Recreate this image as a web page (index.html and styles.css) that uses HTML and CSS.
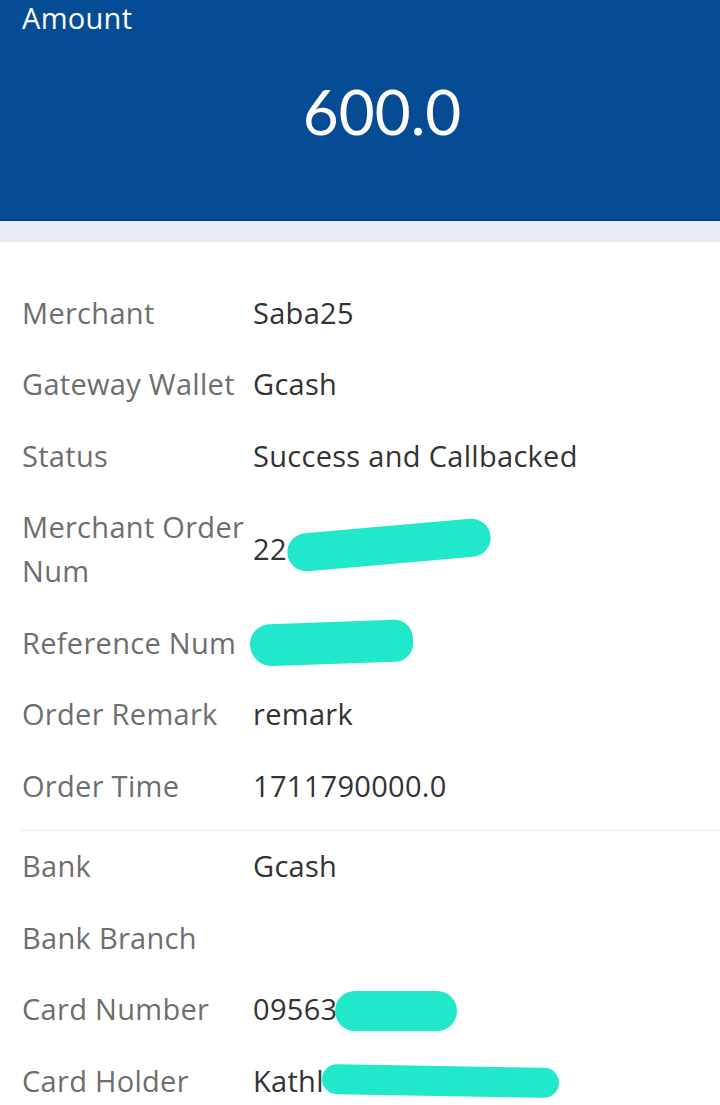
FILE: index.html
```html
<!DOCTYPE html>
<html lang="en">
<head>
<meta charset="utf-8">
<title>Order Detail</title>
<link rel="stylesheet" href="styles.css">
</head>
<body>
<header class="amount-card">
  <div class="amount-label">Amount</div>
  <div class="amount-value">600.0</div>
</header>
<div class="band"></div>
<main class="details">
  <section class="group">
    <div class="row"><div class="label">Merchant</div><div class="value">Saba25</div></div>
    <div class="row"><div class="label">Gateway Wallet</div><div class="value">Gcash</div></div>
    <div class="row"><div class="label">Status</div><div class="value">Success and Callbacked</div></div>
    <div class="row"><div class="label">Merchant Order Num</div><div class="value">22<span class="mask mask-order"></span></div></div>
    <div class="row"><div class="label">Reference Num</div><div class="value"><span class="mask mask-ref"></span></div></div>
    <div class="row"><div class="label">Order Remark</div><div class="value">remark</div></div>
    <div class="row"><div class="label">Order Time</div><div class="value">1711790000.0</div></div>
  </section>
  <section class="group group-divided">
    <div class="row"><div class="label">Bank</div><div class="value">Gcash</div></div>
    <div class="row"><div class="label">Bank Branch</div><div class="value"></div></div>
    <div class="row"><div class="label">Card Number</div><div class="value">09563<span class="mask mask-card"></span></div></div>
    <div class="row"><div class="label">Card Holder</div><div class="value">Kathl<span class="mask mask-holder"></span></div></div>
  </section>
</main>
</body>
</html>
```

FILE: styles.css
```css
html, body {
  margin: 0;
  padding: 0;
  background: #ffffff;
}

body {
  font-family: "Open Sans", Lato, "Liberation Sans", sans-serif;
  width: 720px;
  overflow: hidden;
}

.amount-card {
  background: #054c95;
  height: 219px;
  border-bottom: 2px solid #00428a;
  color: #ffffff;
  display: flex;
  flex-direction: column;
}

.amount-label {
  padding: 0 22px;
  font-size: 29px;
  letter-spacing: 0.3px;
  line-height: 36px;
}

.amount-value {
  padding-left: 44px;
  margin-top: 40px;
  text-align: center;
  font-family: Lato, "Open Sans", sans-serif;
  font-size: 62px;
  line-height: 70px;
}

.band {
  height: 21px;
  background: #e8ebf2;
}

.details {
  padding-top: 35px;
}

.group-divided {
  margin-top: 8px;
  margin-left: 20px;
  border-top: 1px solid #ececec;
}

.group-divided .row {
  margin-left: -20px;
}

.row {
  display: grid;
  grid-template-columns: 231px 1fr;
  align-items: center;
  padding: 13.75px 0 13.75px 22px;
  font-size: 29px;
  letter-spacing: 0.3px;
  line-height: 44px;
}

.label {
  color: #6e6e6e;
  padding-right: 4px;
}

.value {
  color: #333333;
  white-space: nowrap;
  display: flex;
  align-items: center;
}

.mask {
  display: inline-block;
  background: #22e8cb;
  border-radius: 20px;
}

.mask-order {
  width: 204px;
  height: 38px;
  transform: rotate(-5deg);
  margin-left: 0;
  margin-top: -8px;
}

.mask-ref {
  width: 163px;
  height: 42px;
  margin-left: -3px;
  transform: rotate(-2deg);
  border-radius: 22px 20px 20px 24px;
}

.mask-card {
  width: 122px;
  height: 40px;
  margin-left: -2px;
  margin-top: 4px;
}

.mask-holder {
  width: 237px;
  height: 30px;
  margin-left: -2px;
  transform: rotate(1deg);
}
```
